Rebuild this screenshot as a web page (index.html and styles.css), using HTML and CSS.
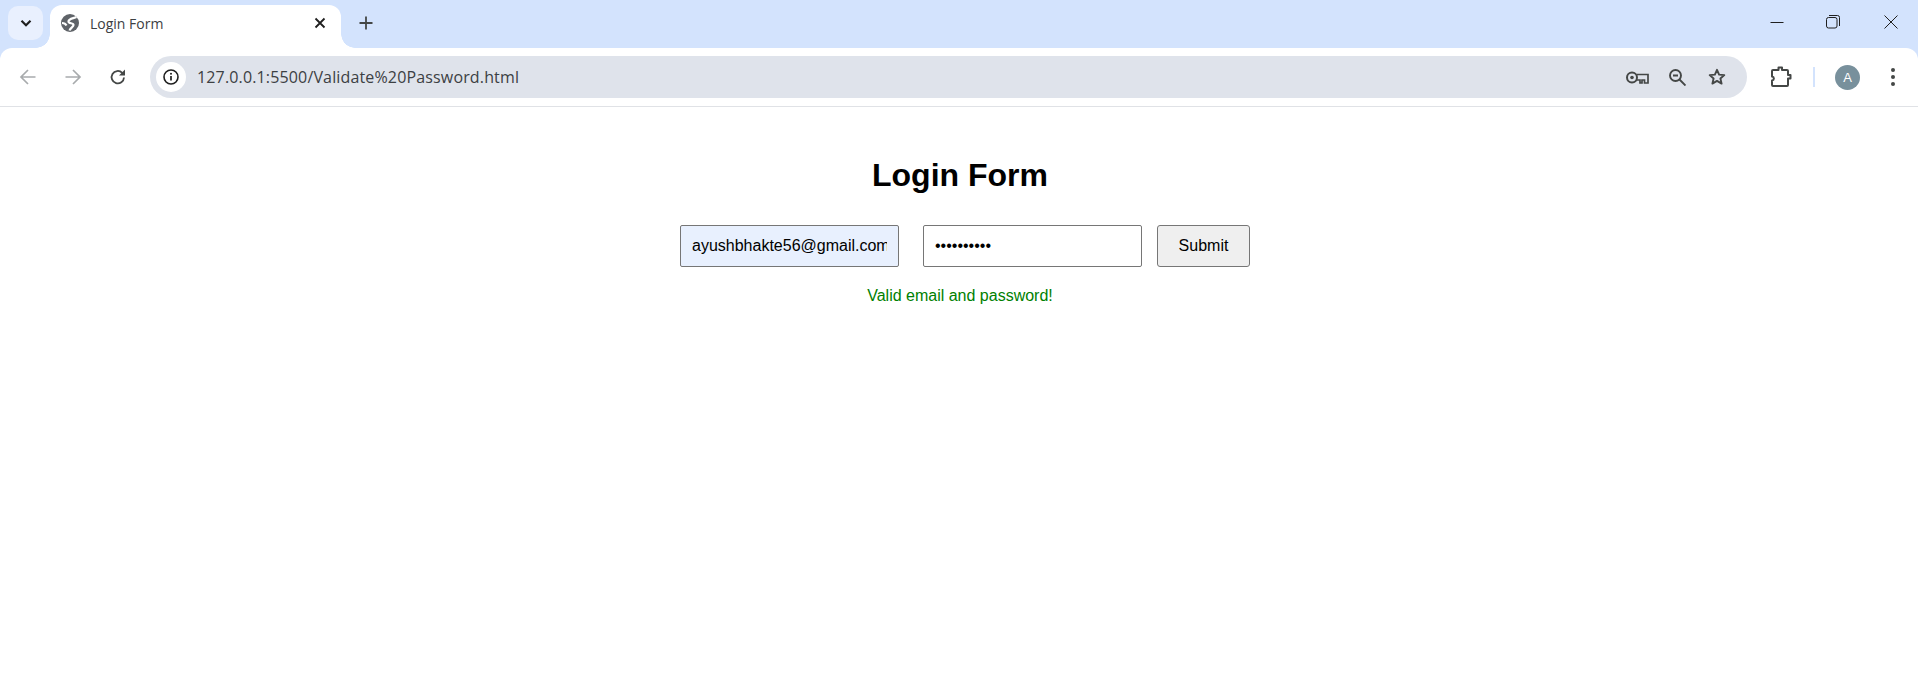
FILE: index.html
```html
<!DOCTYPE html>
<html lang="en">
<head>
  <meta charset="UTF-8" />
  <title>Login Form</title>
  <link rel="stylesheet" href="styles.css">
</head>
<body>

  <header class="tab-strip">
    <div class="tab-search">
      <svg width="16" height="16" viewBox="0 0 16 16"><path d="M3.500 5.800 8 10.200l4.500-4.400" fill="none" stroke="#1f1f1f" stroke-width="2.200"/></svg>
    </div>
    <div class="tab">
      <svg class="favicon" width="18" height="18" viewBox="0 0 18 18">
        <circle cx="9" cy="9" r="9" fill="#5f6368"/>
        <path d="M15.500 3C12.500 4.500 7.500 4.500 7.500 7.500c0 2.500 5 1 5 3.500 0 2-3 2.500-4 5.500M1 9c2 0 3.500.5 4.500 2.500" fill="none" stroke="#fff" stroke-width="2.200"/>
      </svg>
      <span class="tab-title">Login Form</span>
      <svg class="tab-close" width="12" height="12" viewBox="0 0 12 12"><path d="M1.500 1.500l9 9m0-9l-9 9" stroke="#1f1f1f" stroke-width="1.800"/></svg>
    </div>
    <svg class="new-tab" width="14" height="14" viewBox="0 0 14 14"><path d="M7 .5v13M.5 7h13" stroke="#444746" stroke-width="1.800"/></svg>
    <div class="window-controls">
      <svg class="win-min" width="14" height="14" viewBox="0 0 14 14"><path d="M.5 7.500h13" stroke="#1f1f1f" stroke-width="1"/></svg>
      <svg width="14" height="14" viewBox="0 0 14 14"><rect x=".5" y="2.500" width="10.500" height="10.500" rx="2" fill="none" stroke="#1f1f1f"/><path d="M3 .5h8.500a2 2 0 0 1 2 2V11" fill="none" stroke="#1f1f1f"/></svg>
      <svg width="14" height="14" viewBox="0 0 14 14"><path d="M.5.500l13 13m0-13l-13 13" stroke="#1f1f1f" stroke-width="1"/></svg>
    </div>
  </header>

  <nav class="toolbar">
    <div class="nav-buttons">
      <svg width="18" height="18" viewBox="0 0 18 18"><path d="M16.500 9H2M9 2 2 9l7 7" fill="none" stroke="#a8abad" stroke-width="1.700"/></svg>
      <svg width="18" height="18" viewBox="0 0 18 18"><path d="M1.500 9H16M9 2l7 7-7 7" fill="none" stroke="#a8abad" stroke-width="1.700"/></svg>
      <svg width="18" height="18" viewBox="0 0 18 18"><path d="M15 9.500a6.200 6.200 0 1 1-1.800-4.700L15 6.500" fill="none" stroke="#444746" stroke-width="1.800"/><path d="M16 1.500V7.500H10z" fill="#444746"/></svg>
    </div>
    <div class="omnibox">
      <span class="site-info">
        <svg width="16" height="16" viewBox="0 0 16 16"><circle cx="8" cy="8" r="7" fill="none" stroke="#1f1f1f" stroke-width="1.600"/><path d="M8 7v4.500" stroke="#1f1f1f" stroke-width="1.700"/><circle cx="8" cy="4.800" r="1" fill="#1f1f1f"/></svg>
      </span>
      <span class="url">127.0.0.1:5500/Validate%20Password.html</span>
      <div class="omnibox-actions">
        <svg width="23" height="13" viewBox="0 0 23 13"><circle cx="6" cy="6.500" r="5" fill="none" stroke="#444746" stroke-width="2"/><circle cx="6" cy="6.500" r="1.800" fill="#444746"/><path d="M11 3.500h11V12h-3.500V9h-2.500v3H14V9h-3" fill="none" stroke="#444746" stroke-width="1.700"/></svg>
        <svg width="18" height="18" viewBox="0 0 18 18"><circle cx="7.500" cy="7.500" r="5.500" fill="none" stroke="#444746" stroke-width="1.900"/><path d="M5 7.500h5M11.500 11.500l6 6" stroke="#444746" stroke-width="1.900"/></svg>
        <svg class="star" width="18" height="18" viewBox="0 0 18 18"><path d="M9 1.800l2.100 4.800 5.200.5-3.900 3.400 1.200 5.100L9 12.900l-4.600 2.700 1.200-5.100-3.900-3.400 5.200-.5z" fill="none" stroke="#444746" stroke-width="1.900" stroke-linejoin="round"/></svg>
      </div>
    </div>
    <div class="toolbar-actions">
      <svg width="22" height="22" viewBox="0 0 22 22"><path d="M3 4H8.500V1.500h3.500V4H17a1 1 0 0 1 1 1v4h2.500v3.500H18V19a1 1 0 0 1-1 1H3a1 1 0 0 1-1-1v-4.500c2.500-.5 2.500-3.500 0-4V5a1 1 0 0 1 1-1z" fill="none" stroke="#444746" stroke-width="2" stroke-linejoin="round"/></svg>
      <span class="divider"></span>
      <span class="avatar">A</span>
      <svg class="dots" width="6" height="20" viewBox="0 0 6 20"><circle cx="3" cy="3" r="2" fill="#444746"/><circle cx="3" cy="10" r="2" fill="#444746"/><circle cx="3" cy="17" r="2" fill="#444746"/></svg>
    </div>
  </nav>

  <main class="page">
    <h1>Login Form</h1>
    <form class="login-form">
      <input class="field field-email" type="text" value="ayushbhakte56@gmail.com">
      <input class="field field-password" type="password" value="abcdefghij">
      <button class="submit" type="button">Submit</button>
    </form>
    <p class="status">Valid email and password!</p>
  </main>

</body>
</html>
```

FILE: styles.css
```css
html, body {
  height: 100%;
  overflow: hidden;
}
body {
  margin: 0;
  background: #fff;
  font-family: "Liberation Sans", Arial, sans-serif;
  color: #000;
}

/* tab strip */
.tab-strip {
  display: flex;
  align-items: flex-start;
  height: 48px;
  background: #d3e3fd;
}
.tab-search {
  display: flex;
  align-items: center;
  justify-content: center;
  width: 35px;
  height: 34px;
  margin: 6px 0 0 8px;
  background: #e9f0fe;
  border-radius: 10px;
}
.tab {
  position: relative;
  display: flex;
  align-items: center;
  width: 291px;
  height: 43px;
  margin: 5px 0 0 7px;
  padding-bottom: 7px;
  box-sizing: border-box;
  background: #fff;
  border-radius: 12px 12px 0 0;
}
.tab::before,
.tab::after {
  content: "";
  position: absolute;
  bottom: 0;
  width: 14px;
  height: 14px;
}
.tab::before {
  left: -14px;
  background: radial-gradient(circle at 0 0, transparent 13.500px, #fff 14px);
}
.tab::after {
  right: -14px;
  background: radial-gradient(circle at 100% 0, transparent 13.500px, #fff 14px);
}
.favicon {
  margin-left: 11px;
}
.tab-title {
  margin-left: 11px;
  font-family: "Open Sans", sans-serif;
  font-size: 14px;
  color: #3c4043;
}
.tab-close {
  margin-left: auto;
  margin-right: 15px;
}
.new-tab {
  margin: 16px 0 0 18px;
}
.window-controls {
  display: flex;
  gap: 44px;
  margin: 15px 20px 0 auto;
}
.win-min {
  margin-right: -2px;
}

/* toolbar */
.toolbar {
  display: flex;
  align-items: center;
  height: 59px;
  box-sizing: border-box;
  background: #fff;
  border-radius: 12px 12px 0 0;
  border-bottom: 1px solid #e0e2e6;
  box-shadow: 0 -14px 0 #d3e3fd;
}
.nav-buttons {
  display: flex;
  gap: 27px;
  margin-left: 19px;
}
.omnibox {
  display: flex;
  align-items: center;
  width: 1597px;
  height: 42px;
  margin-left: 23px;
  background: #dfe3eb;
  border-radius: 21px;
}
.site-info {
  display: flex;
  align-items: center;
  justify-content: center;
  width: 30px;
  height: 30px;
  margin-left: 6px;
  background: #fff;
  border-radius: 50%;
}
.url {
  margin-left: 11px;
  font-family: "Open Sans", sans-serif;
  font-size: 16px;
  letter-spacing: 0.15px;
  color: #3c4043;
}
.omnibox-actions {
  display: flex;
  align-items: center;
  gap: 19px;
  margin-left: auto;
  margin-right: 21px;
}
.star {
  margin-left: 3px;
}
.toolbar-actions {
  display: flex;
  align-items: center;
  margin-left: 23px;
}
.divider {
  width: 2px;
  height: 20px;
  margin-left: 21px;
  background: #d3e3fd;
}
.avatar {
  width: 25px;
  height: 25px;
  margin-left: 20px;
  border-radius: 50%;
  background: #78909c;
  color: #fff;
  font-size: 13px;
  line-height: 25px;
  text-align: center;
}
.dots {
  margin-left: 30px;
}

/* login form */
.page {
  padding-left: 2px;
  text-align: center;
}
h1 {
  margin: 50px 0 31px;
  font-size: 32px;
  line-height: 37px;
}
.login-form {
  display: flex;
  justify-content: center;
  padding-left: 10px;
}
.field {
  width: 219px;
  height: 42px;
  padding: 0 11px;
  box-sizing: border-box;
  border: 1px solid #767676;
  border-radius: 2px;
  font-family: inherit;
  font-size: 16px;
  color: #000;
  outline: none;
}
.field-email {
  margin-right: 24px;
  background: #e8f0fe;
}
.field-password {
  margin-right: 15px;
  background: #fff;
}
.submit {
  width: 93px;
  height: 42px;
  border: 1px solid #767676;
  border-radius: 3px;
  background: #efefef;
  font-family: inherit;
  font-size: 16px;
  color: #000;
}
.status {
  margin: 20px 0 0;
  font-size: 16px;
  line-height: 18px;
  color: green;
}
```
